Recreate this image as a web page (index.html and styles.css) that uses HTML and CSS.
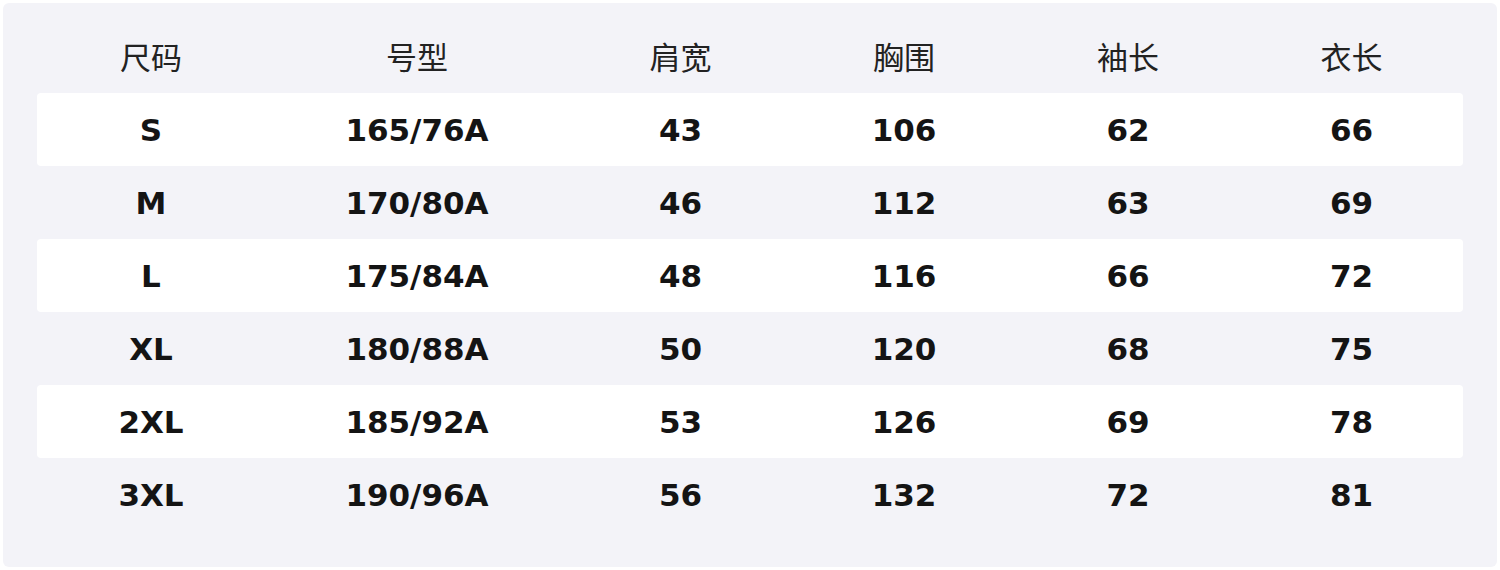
FILE: index.html
```html
<!DOCTYPE html>
<html lang="zh-CN">
<head>
<meta charset="utf-8">
<title>尺码表</title>
<link rel="stylesheet" href="styles.css">
</head>
<body>
<div class="panel">
  <div class="table">
    <div class="row head"><div>尺码</div><div>号型</div><div>肩宽</div><div>胸围</div><div>袖长</div><div>衣长</div></div>
    <div class="row odd"><div>S</div><div>165/76A</div><div>43</div><div>106</div><div>62</div><div>66</div></div>
    <div class="row"><div>M</div><div>170/80A</div><div>46</div><div>112</div><div>63</div><div>69</div></div>
    <div class="row odd"><div>L</div><div>175/84A</div><div>48</div><div>116</div><div>66</div><div>72</div></div>
    <div class="row"><div>XL</div><div>180/88A</div><div>50</div><div>120</div><div>68</div><div>75</div></div>
    <div class="row odd"><div>2XL</div><div>185/92A</div><div>53</div><div>126</div><div>69</div><div>78</div></div>
    <div class="row"><div>3XL</div><div>190/96A</div><div>56</div><div>132</div><div>72</div><div>81</div></div>
  </div>
</div>
</body>
</html>
```
FILE: styles.css
```css
html, body {
  margin: 0;
  padding: 0;
  background: #ffffff;
}
body {
  padding: 3px;
  font-family: "DejaVu Sans", "Noto Sans CJK SC", sans-serif;
}
.panel {
  width: 1494px;
  height: 564px;
  box-sizing: border-box;
  background: #f3f3f8;
  border-radius: 6px;
  padding: 17px 34px 36px;
}
.table {
  display: flex;
  flex-direction: column;
}
.row {
  display: grid;
  grid-template-columns: 228px 304px 223px 224px 224px 223px;
  height: 73px;
  align-items: center;
  font-size: 31px;
  font-weight: bold;
  color: #141414;
  border-radius: 4px;
}
.row > div {
  text-align: center;
  line-height: 1;
  padding-top: 2px;
}
.row.odd {
  background: #ffffff;
}
.row.head {
  font-family: "Noto Sans CJK SC", sans-serif;
  font-weight: normal;
  color: #222222;
  font-size: 31px;
}
.row.head > div {
  padding-top: 0;
  padding-bottom: 2px;
}
```
